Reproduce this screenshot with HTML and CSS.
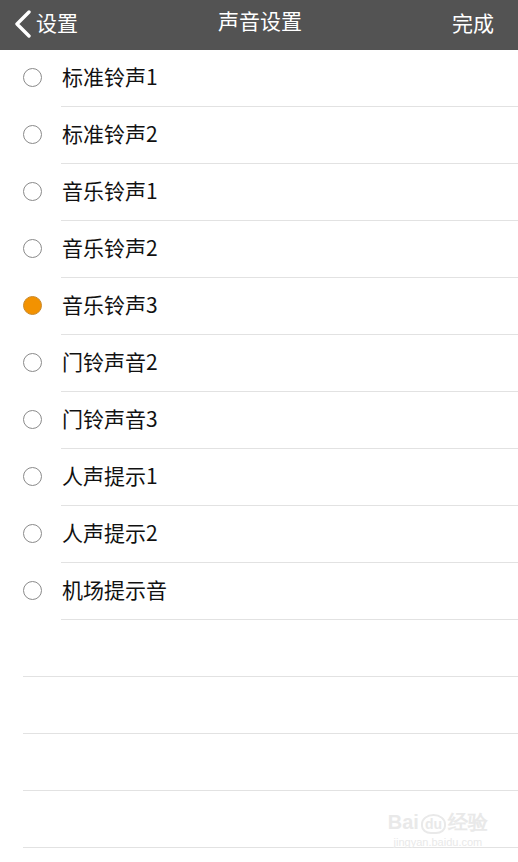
FILE: index.html
```html
<!DOCTYPE html>
<html lang="zh">
<head>
    <meta charset="UTF-8">
    <title>声音设置</title>
    <link rel="stylesheet" href="styles.css">
</head>
<body>
    <header class="navbar">
        <a class="nav-back" href="#">
            <svg width="19" height="28" viewBox="0 0 19 28"><path d="M16 2 L4 14 L16 26" fill="none" stroke="#fff" stroke-width="3.4" stroke-linecap="round" stroke-linejoin="round"/></svg>
            <span>设置</span>
        </a>
        <h1 class="nav-title">声音设置</h1>
        <a class="nav-done" href="#">完成</a>
    </header>

    <ul class="sound-list">
        <li class="sound-item"><span class="radio"></span><span class="label">标准铃声1</span></li>
        <li class="sound-item"><span class="radio"></span><span class="label">标准铃声2</span></li>
        <li class="sound-item"><span class="radio"></span><span class="label">音乐铃声1</span></li>
        <li class="sound-item"><span class="radio"></span><span class="label">音乐铃声2</span></li>
        <li class="sound-item"><span class="radio checked"></span><span class="label">音乐铃声3</span></li>
        <li class="sound-item"><span class="radio"></span><span class="label">门铃声音2</span></li>
        <li class="sound-item"><span class="radio"></span><span class="label">门铃声音3</span></li>
        <li class="sound-item"><span class="radio"></span><span class="label">人声提示1</span></li>
        <li class="sound-item"><span class="radio"></span><span class="label">人声提示2</span></li>
        <li class="sound-item"><span class="radio"></span><span class="label">机场提示音</span></li>
    </ul>

    <div class="empty-rows">
        <div class="empty-row"></div>
        <div class="empty-row"></div>
        <div class="empty-row"></div>
        <div class="empty-row"></div>
    </div>

    <div class="watermark">
        <div class="wm-logo">Bai<span class="wm-du">du</span>经验</div>
        <div class="wm-url">jingyan.baidu.com</div>
    </div>
</body>
</html>
```

FILE: styles.css
```css
* {
    box-sizing: border-box;
    margin: 0;
    padding: 0;
}

body {
    font-family: "Noto Sans CJK SC", "Noto Sans", sans-serif;
    background: #fff;
    color: #111;
    width: 518px;
    height: 862px;
    overflow: hidden;
    position: relative;
}

.navbar {
    height: 50px;
    background: #535353;
    color: #fff;
    display: flex;
    align-items: center;
    justify-content: space-between;
    padding: 0 24px 6px 13px;
    position: relative;
}

.nav-back {
    display: flex;
    align-items: center;
    gap: 4px;
    color: #fff;
    text-decoration: none;
    font-size: 21px;
}

.nav-back svg {
    display: block;
    margin-top: 4px;
}

.nav-title {
    position: absolute;
    left: 0;
    right: 0;
    top: 5px;
    text-align: center;
    font-size: 21px;
    font-weight: 400;
    padding-left: 2px;
    pointer-events: none;
}

.nav-done {
    color: #fff;
    text-decoration: none;
    font-size: 21px;
}

.sound-list {
    list-style: none;
}

.sound-item {
    height: 57px;
    display: flex;
    align-items: center;
    padding-left: 23px;
    position: relative;
}

.sound-item::after {
    content: "";
    position: absolute;
    left: 61px;
    right: 0;
    bottom: 0;
    height: 1px;
    background: #e2e2e2;
}

.radio {
    width: 19px;
    height: 19px;
    border: 1px solid #8a8a8a;
    border-radius: 50%;
    margin-top: -2px;
}

.radio.checked {
    background: #f39200;
    border-color: #c98a2e;
}

.label {
    margin-left: 20px;
    font-size: 21px;
    margin-top: -6px;
}

.empty-row {
    height: 57px;
    margin-left: 23px;
    border-bottom: 1px solid #e2e2e2;
}

.watermark {
    position: absolute;
    right: 30px;
    bottom: 14px;
    color: #e9e9e9;
    text-align: center;
    font-family: "Liberation Sans", sans-serif;
}

.wm-logo {
    font-size: 20px;
    font-weight: 700;
}

.wm-du {
    font-size: 14px;
    border: 2px solid #e9e9e9;
    border-radius: 50% 50% 40% 40%;
    padding: 0 2px;
    margin: 0 2px;
}

.wm-url {
    font-size: 11px;
}
```
